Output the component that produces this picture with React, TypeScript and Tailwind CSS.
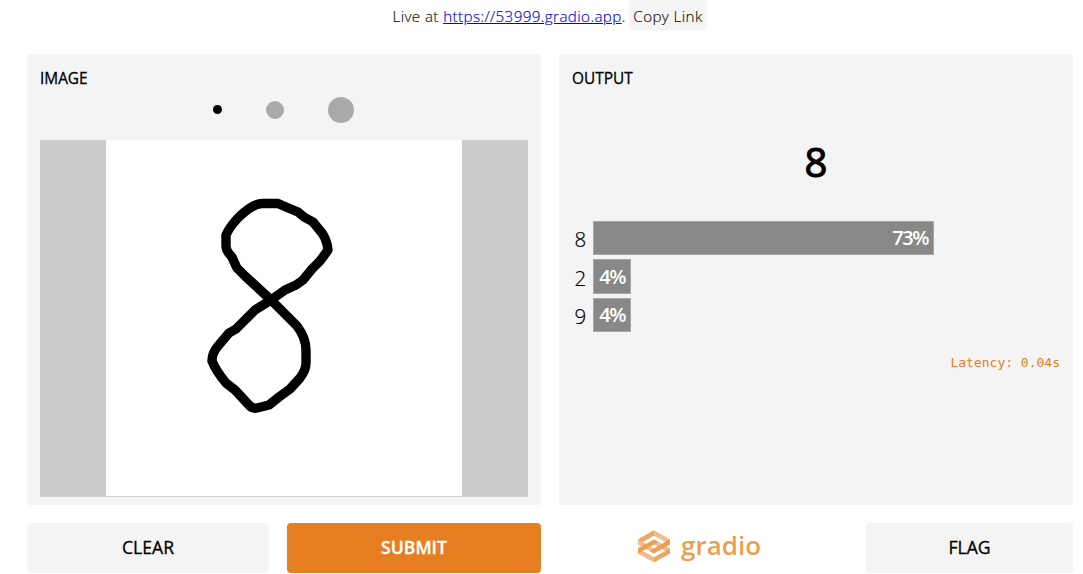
import React from "react";

const bars = [
  { label: "8", value: "73%", box: "w-[341px]" },
  { label: "2", value: "4%", box: "w-[38px]" },
  { label: "9", value: "4%", box: "w-[38px]" },
];

function Logo() {
  return (
    <svg width="32" height="33" viewBox="0 0 32 33">
      <path d="M16 .3 L32 9.3 V14.6 L16 5.8Z" fill="#f2bd89" />
      <path d="M16 .3 L0 9.3 V14.6 L16 5.8Z" fill="#eda765" />
      <path d="M0 9.3 L16 18.3 V23.6 L0 14.6Z" fill="#f2bd89" />
      <path d="M32 18.3 L16 9.4 V14.8 L32 23.6Z" fill="#f2bd89" />
      <path d="M0 18.3 L16 27.2 V32.6 L0 23.6Z" fill="#f2bd89" />
      <path d="M32 18.3 L16 27.2 V32.6 L32 23.6Z" fill="#eda765" />
      <path d="M0 18.3 L16 9.4 L20.5 12 L0 23.6Z" fill="#eb9f55" />
      <path d="M32 9.3 V14.6 L16 23.6 L11.5 21Z" fill="#eb9f55" />
    </svg>
  );
}

function Drawing() {
  return (
    <svg width="356" height="356" viewBox="106 140 356 356" className="block bg-white">
      <path
        d="M271 300 L257 287 L245 276 L237 268 Q234 262 232 257 Q226 251 226 246 V235 Q229 228 237 219 Q245 211 250 208 Q257 203.500 262 203.500 H278 L286 207 L298 212 L304 217 L313 222 L322 233 Q327 240 328 250 L320 261 L312 269 L303 280 L296 285 L285 290 L271 300 L255 310 L244 321 L236 329 L229 333 L218 346 Q212 353 212 361 Q216 371 226 383 L235 390 L248 404 Q252 409 257 408 L269 405 L279 397 L290 389 L300 378 Q306 370 306 363 V350 Q306 338 297 326Z"
        fill="none" stroke="#000" strokeWidth="9.4" strokeLinejoin="round"
      />
    </svg>
  );
}

export default function App() {
  return (
    <div className="h-[574px] w-[1083px] overflow-hidden bg-white font-['Open_Sans',sans-serif] text-black">
      <div className="flex h-[54px] items-start pl-[392.5px] text-[15.2px] leading-[30px] tracking-[0.39px] text-[#111]">
        <p className="w-[232.5px] pt-px font-light whitespace-pre [-webkit-text-stroke:0.15px_currentColor]">Live at <a className="text-[#0000ee] underline">https://53999.gradio.app</a>.</p>
        <button className="ml-[4px] h-[30px] w-[78px] rounded-b-[3px] bg-[#f4f4f4] pt-px font-light whitespace-nowrap [-webkit-text-stroke:0.15px_currentColor]">Copy Link</button>
      </div>
      <main className="flex gap-[18px] pl-[27px]">
        <section className="flex h-[451px] w-[514px] flex-col rounded-[4px] bg-[#f4f4f4] px-[13px]">
          <h2 className="pt-[13px] text-[15.4px] leading-[24px] font-medium [-webkit-text-stroke:0.3px_black]">IMAGE</h2>
          <div className="flex h-[37px] items-center pl-[173px]">
            <span className="size-[9px] rounded-full bg-black" />
            <span className="ml-[43.5px] size-[18px] rounded-full bg-[#aaa]" />
            <span className="ml-[44px] size-[26px] rounded-full bg-[#aaa]" />
          </div>
          <div className="mt-[12px] flex h-[357px] w-[488px] justify-center border-b border-[#d4d4d4] bg-[#cbcbcb]">
            <Drawing />
          </div>
        </section>
        <section className="h-[451px] w-[514px] rounded-[4px] bg-[#f4f4f4] px-[13px]">
          <h2 className="pt-[13px] text-[15.4px] leading-[24px] font-medium [-webkit-text-stroke:0.3px_black]">OUTPUT</h2>
          <div className="mt-[41px] h-[60px] text-center text-[40px] leading-[60px] font-medium [-webkit-text-stroke:1.1px_black]">8</div>
          <div className="mt-[29px] flex flex-col gap-[4px]">
            {bars.map((b) => (
              <div key={b.label} className="flex h-[34.4px] items-center text-[20.5px]">
                <span className="w-[21px] pt-[3px] pl-[2.5px] font-light [-webkit-text-stroke:0.2px_black]">{b.label}</span>
                <span className={`${b.box} flex h-full items-center justify-end border border-[#a6a6a6] bg-[#888] pr-[5px] text-[20px] font-semibold tracking-[-1.5px] text-white`}>{b.value}</span>
              </div>
            ))}
          </div>
          <p className="mt-[19px] text-right font-['DejaVu_Sans_Mono',monospace] text-[13px] leading-[24px] text-[#e67e22]">Latency: 0.04s</p>
        </section>
      </main>
      <footer className="mt-[18px] flex pl-[27px] text-[17.6px] font-semibold">
        <button className="h-[50px] w-[242px] rounded-[4px] bg-[#f4f4f4] pb-px font-medium [-webkit-text-stroke:0.3px_black]">CLEAR</button>
        <button className="ml-[18px] h-[50px] w-[254px] rounded-[4px] bg-[#e67e22] pb-px text-white [-webkit-text-stroke:0.3px_white]">SUBMIT</button>
        <div className="flex h-[50px] w-[325px] items-start pt-[7px] pl-[97px] text-[#eb9f55]">
          <Logo />
          <span className="ml-[11px] text-[26px] leading-[31px]">gradio</span>
        </div>
        <button className="h-[50px] w-[207px] rounded-[4px] bg-[#f4f4f4] pb-px font-medium [-webkit-text-stroke:0.3px_black]">FLAG</button>
      </footer>
    </div>
  );
}
